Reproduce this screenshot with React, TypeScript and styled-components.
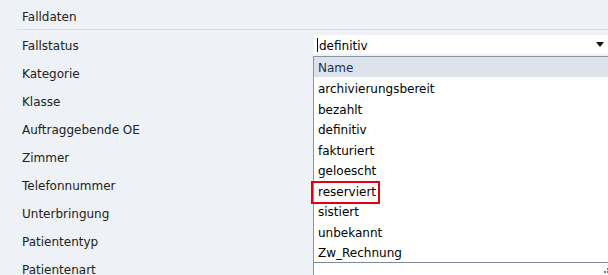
import React from 'react';
import styled, { createGlobalStyle } from 'styled-components';

const labels = [
  'Fallstatus',
  'Kategorie',
  'Klasse',
  'Auftraggebende OE',
  'Zimmer',
  'Telefonnummer',
  'Unterbringung',
  'Patiententyp',
  'Patientenart',
];

const options = [
  'archivierungsbereit',
  'bezahlt',
  'definitiv',
  'fakturiert',
  'geloescht',
  'reserviert',
  'sistiert',
  'unbekannt',
  'Zw_Rechnung',
];

const App = () => {
  return (
    <>
      <GlobalStyle />
      <Page>
        <SectionHeader>Falldaten</SectionHeader>
        <Form>
          {labels.map((label, i) => (
            <Row key={label}>
              <Label>{label}</Label>
              <Value>
                {i === 0 && (
                  <Combo>
                    <Caret />
                    <ComboText>definitiv</ComboText>
                    <Arrow />
                  </Combo>
                )}
              </Value>
            </Row>
          ))}
        </Form>
        <Popup>
          <ListHeader>Name</ListHeader>
          {options.map((opt) => (
            <Item key={opt}>
              <ItemText $marked={opt === 'reserviert'}>{opt}</ItemText>
            </Item>
          ))}
          <PopupFooter>
            <Grip width="7" height="7" viewBox="0 0 7 7">
              <rect x="5" y="0" width="2" height="2" fill="#6d7885" />
              <rect x="2" y="3" width="2" height="2" fill="#6d7885" />
              <rect x="5" y="3" width="2" height="2" fill="#6d7885" />
            </Grip>
          </PopupFooter>
        </Popup>
      </Page>
    </>
  );
};

const GlobalStyle = createGlobalStyle`
  html, body {
    margin: 0;
    padding: 0;
    background: #eef1f5;
  }
`;

// Whole panel
const Page = styled.div`
  position: relative;
  width: 608px;
  height: 275px;
  overflow: hidden;
  background: #eef1f5;
  font-family: "DejaVu Sans", Verdana, sans-serif;
  font-size: 12px;
  color: #222;
`;

const SectionHeader = styled.div`
  margin-left: 17px;
  padding-left: 5px;
  height: 29px;
  line-height: 34px;
  border-bottom: 1px solid #d7dde6;
`;

const Form = styled.div`
  padding-top: 1px;
  display: flex;
  flex-direction: column;
`;

const Row = styled.div`
  display: flex;
  align-items: center;
  height: 28px;
`;

const Label = styled.div`
  width: 292px;
  padding-left: 22px;
  padding-top: 2px;
`;

const Value = styled.div`
  flex: 1;
  display: flex;
  align-items: center;
`;

const Combo = styled.div`
  position: relative;
  display: flex;
  align-items: center;
  height: 19px;
  width: 100%;
  margin-top: -1px;
  background: #fff;
  padding-left: 3px;
  color: #000;
`;

const Caret = styled.span`
  width: 1px;
  height: 14px;
  background: #000;
  margin-right: 1px;
`;

const ComboText = styled.span`
  flex: 1;
  padding-top: 2px;
`;

const Arrow = styled.span`
  width: 0;
  height: 0;
  margin-right: 4px;
  border-left: 4px solid transparent;
  border-right: 4px solid transparent;
  border-top: 5px solid #111;
`;

// Drop-down list lying over the form
const Popup = styled.div`
  position: absolute;
  left: 313px;
  top: 56px;
  width: 310px;
  background: #fff;
  border-left: 1px solid #8c949e;
  border-top: 1px solid #8c949e;
  display: flex;
  flex-direction: column;
  color: #000;
`;

const ListHeader = styled.div`
  height: 20px;
  line-height: 22px;
  padding-left: 4px;
  background: #dde3ec;
  color: #1c2f4d;
`;

const Item = styled.div`
  box-sizing: border-box;
  height: 20.5px;
  padding-top: 4px;
  line-height: 16.5px;
  padding-left: 4px;
`;

const ItemText = styled.span<{ $marked?: boolean }>`
  position: relative;

  &::after {
    content: '';
    display: ${(p) => (p.$marked ? 'block' : 'none')};
    position: absolute;
    left: -7px;
    right: -4px;
    top: -4px;
    bottom: -5px;
    border: 2px solid #e3000f;
  }
`;

const PopupFooter = styled.div`
  position: relative;
  height: 20px;
  border-top: 1px solid #7d8893;
`;

const Grip = styled.svg`
  position: absolute;
  left: 288px;
  top: 5px;
`;

export default App;
